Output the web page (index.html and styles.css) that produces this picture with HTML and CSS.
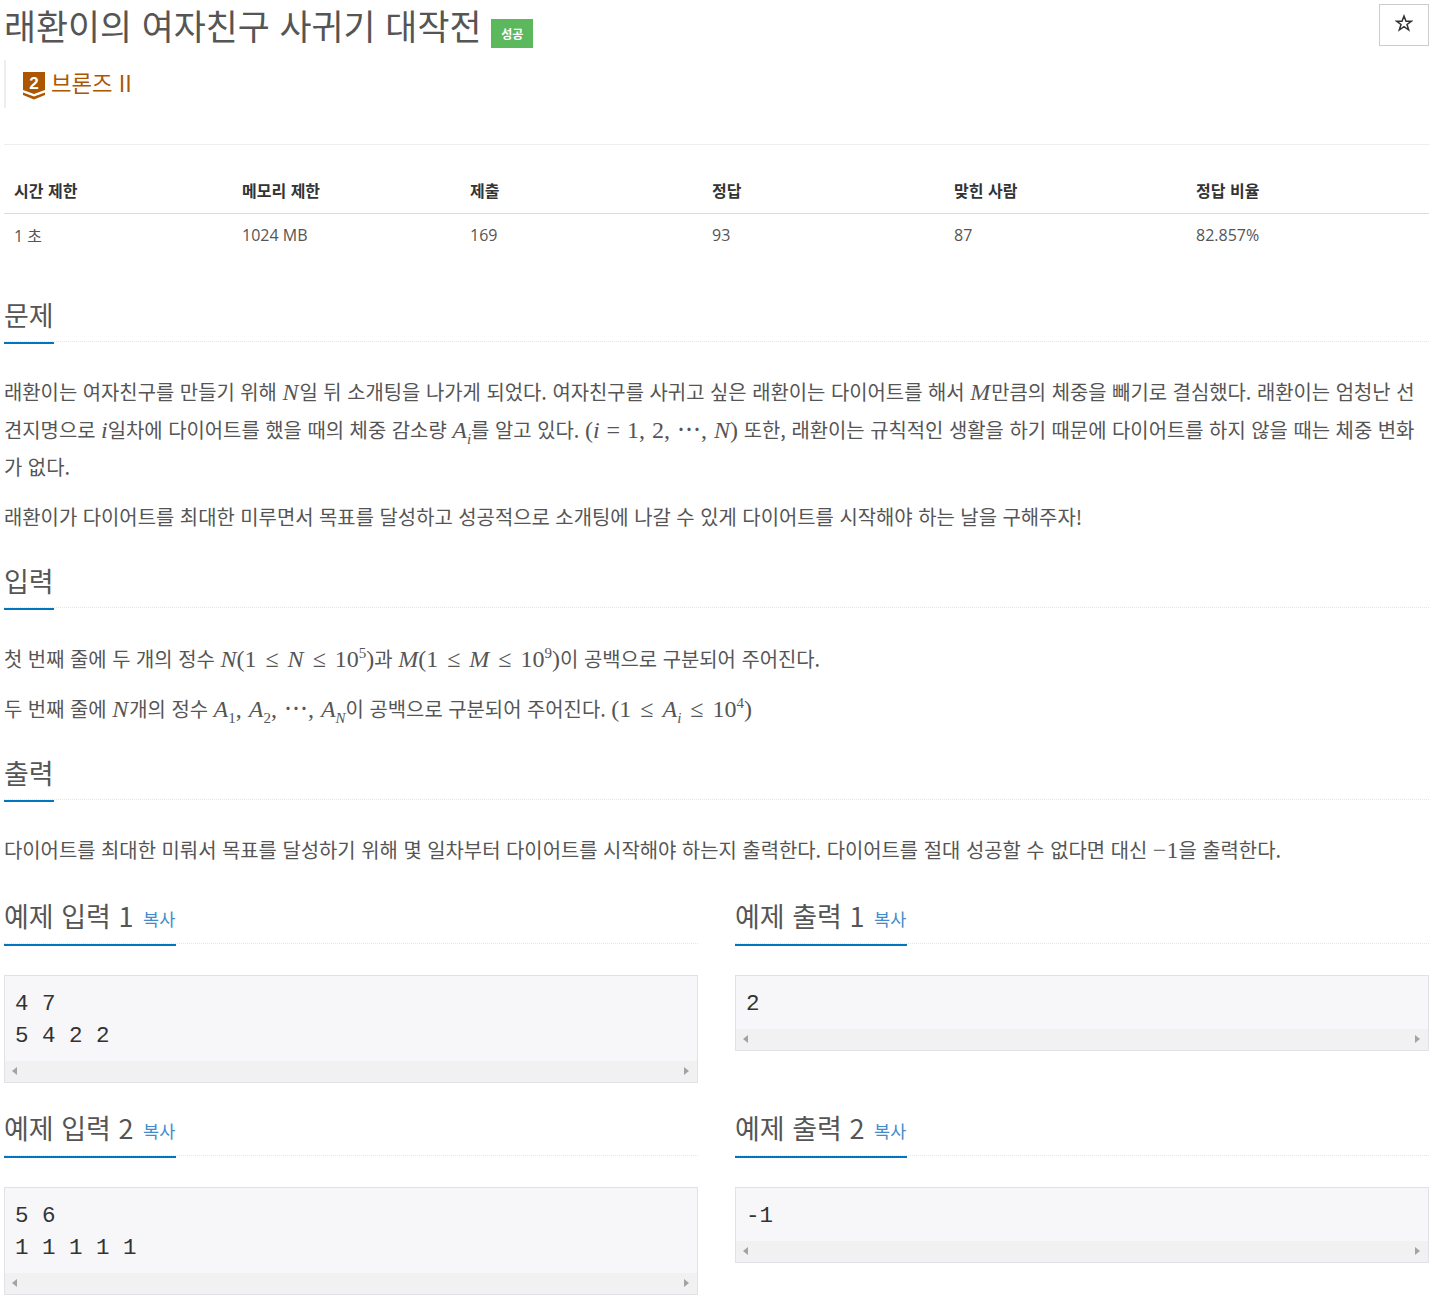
FILE: index.html
```html
<!DOCTYPE html>
<html lang="ko">
<head>
    <meta charset="UTF-8">
    <meta name="viewport" content="width=device-width, initial-scale=1.0">
    <title>래환이의 여자친구 사귀기 대작전</title>
    <link rel="stylesheet" href="styles.css">
</head>
<body>
    <div class="page">
        <div class="page-header">
            <h1 class="problem-title">래환이의 여자친구 사귀기 대작전 <span class="label-success">성공</span></h1>
            <button class="star-btn" type="button" aria-label="star">
                <svg viewBox="0 0 18 18" width="18" height="18">
                    <path d="M9 2L11 7.200H16.500L12 10.500L13.700 16L9 12.700L4.300 16L6 10.500L1.500 7.200H7Z" fill="none" stroke="#333" stroke-width="1.500"/>
                </svg>
            </button>
        </div>
        <div class="tier">
            <svg class="tier-icon" viewBox="0 0 22 28" width="22" height="28">
                <path d="M0 0H22V18L11 22L0 18Z" fill="#ad5600"/>
                <path d="M0 20.500L11 24.500L22 20.500V23L11 27.500L0 23Z" fill="#ad5600"/>
                <text x="11" y="17" text-anchor="middle" class="tier-num">2</text>
            </svg>
            <span class="tier-name">브론즈 II</span>
        </div>
        <hr class="divider">

        <table class="info-table">
            <thead>
                <tr>
                    <th class="col-1">시간 제한</th>
                    <th class="col-2">메모리 제한</th>
                    <th class="col-3">제출</th>
                    <th class="col-3">정답</th>
                    <th class="col-3">맞힌 사람</th>
                    <th>정답 비율</th>
                </tr>
            </thead>
            <tbody>
                <tr>
                    <td>1 초</td>
                    <td>1024 MB</td>
                    <td>169</td>
                    <td>93</td>
                    <td>87</td>
                    <td>82.857%</td>
                </tr>
            </tbody>
        </table>

        <section class="section section-problem">
            <div class="headline"><h2>문제</h2></div>
            <p>래환이는 여자친구를 만들기 위해 <i class="m m-n">N</i>일 뒤 소개팅을 나가게 되었다. 여자친구를 사귀고 싶은 래환이는 다이어트를 해서 <i class="m m-n">M</i>만큼의 체중을 빼기로 결심했다. 래환이는 엄청난 선견지명으로 <i class="m">i</i>일차에 다이어트를 했을 때의 체중 감소량 <i class="m">A<sub>i</sub></i>를 알고 있다. <span class="m-up m-list">(<i>i</i> = 1, 2, ⋯, <i>N</i>)</span> 또한, 래환이는 규칙적인 생활을 하기 때문에 다이어트를 하지 않을 때는 체중 변화가 없다.</p>
            <p>래환이가 다이어트를 최대한 미루면서 목표를 달성하고 성공적으로 소개팅에 나갈 수 있게 다이어트를 시작해야 하는 날을 구해주자!</p>
        </section>

        <section class="section section-input">
            <div class="headline"><h2>입력</h2></div>
            <p>첫 번째 줄에 두 개의 정수 <span class="m-up"><i>N</i>(1 ≤ <i>N</i> ≤ 10<sup>5</sup>)</span>과 <span class="m-up"><i>M</i>(1 ≤ <i>M</i> ≤ 10<sup>9</sup>)</span>이 공백으로 구분되어 주어진다.</p>
            <p>두 번째 줄에 <i class="m m-n">N</i>개의 정수 <span class="m-up m-list"><i>A</i><sub>1</sub>, <i>A</i><sub>2</sub>, ⋯, <i>A<sub>N</sub></i></span>이 공백으로 구분되어 주어진다. <span class="m-up">(1 ≤ <i>A<sub>i</sub></i> ≤ 10<sup>4</sup>)</span></p>
        </section>

        <section class="section section-output">
            <div class="headline"><h2>출력</h2></div>
            <p>다이어트를 최대한 미뤄서 목표를 달성하기 위해 몇 일차부터 다이어트를 시작해야 하는지 출력한다. 다이어트를 절대 성공할 수 없다면 대신 <span class="m-up">−1</span>을 출력한다.</p>
        </section>

        <div class="samples">
            <div class="sample">
                <div class="headline"><h2>예제 입력 1 <button class="copy" type="button">복사</button></h2></div>
                <pre class="sampledata"><code>4 7
5 4 2 2</code><span class="hscroll"></span></pre>
            </div>
            <div class="sample">
                <div class="headline"><h2>예제 출력 1 <button class="copy" type="button">복사</button></h2></div>
                <pre class="sampledata"><code>2</code><span class="hscroll"></span></pre>
            </div>
            <div class="sample">
                <div class="headline"><h2>예제 입력 2 <button class="copy" type="button">복사</button></h2></div>
                <pre class="sampledata"><code>5 6
1 1 1 1 1</code><span class="hscroll"></span></pre>
            </div>
            <div class="sample">
                <div class="headline"><h2>예제 출력 2 <button class="copy" type="button">복사</button></h2></div>
                <pre class="sampledata"><code>-1</code><span class="hscroll"></span></pre>
            </div>
        </div>
    </div>
</body>
</html>
```

FILE: styles.css
```css
:root {
    --text-color: #555;
    --blue: #0076c0;
    --line: #eee;
    --kr-font: "Noto Sans CJK KR", "Open Sans", sans-serif;
}

* {
    margin: 0;
    padding: 0;
    box-sizing: border-box;
}

body {
    font-family: "Open Sans", "Noto Sans CJK KR", sans-serif;
    background-color: #fff;
    color: var(--text-color);
    font-size: 14px;
}

.page {
    padding: 0 2px 0 4px;
    height: 1296px;
    overflow: hidden;
}

.page-header {
    display: flex;
    justify-content: space-between;
    align-items: flex-start;
    height: 60px;
}

.problem-title {
    font-family: var(--kr-font);
    font-size: 34.800px;
    font-weight: 400;
    line-height: 50px;
    color: #555;
}

.label-success {
    display: inline-block;
    background-color: #5cb85c;
    color: #fff;
    font-size: 12px;
    font-weight: 700;
    line-height: 29px;
    width: 42px;
    height: 29px;
    text-align: center;
    vertical-align: 1px;
}

.star-btn {
    display: flex;
    justify-content: center;
    width: 50px;
    height: 42px;
    margin-top: 4px;
    padding-top: 9px;
    background-color: #fff;
    border: 1px solid #ccc;
}

.tier {
    display: flex;
    align-items: flex-start;
    height: 48px;
    padding: 12px 0 0 17px;
    border-left: 2px solid #eee;
    color: #ad5600;
}

.tier-icon {
    display: block;
    flex: none;
    overflow: visible;
}

.tier-num {
    font-family: "Liberation Sans", sans-serif;
    font-size: 17px;
    font-weight: 700;
    fill: #fff;
}

.tier-name {
    font-family: var(--kr-font);
    font-size: 22.300px;
    line-height: 20px;
    margin-left: 6px;
}

.divider {
    border: 0;
    border-top: 1px solid var(--line);
    margin-top: 36px;
}

.info-table {
    width: 100%;
    margin-top: 24px;
    border-collapse: collapse;
    table-layout: fixed;
}

.info-table th {
    text-align: left;
    font-family: var(--kr-font);
    font-size: 16px;
    font-weight: 700;
    color: #333;
    height: 44px;
    padding: 0 10px 2px;
    border-bottom: 1px solid #ddd;
}

.info-table td {
    height: 43px;
    padding: 0 10px;
    font-size: 16px;
    color: #555;
    font-family: "Open Sans", "Noto Sans CJK KR", sans-serif;
}

.col-1, .col-2 {
    width: 228px;
}

.col-3 {
    width: 242px;
}

.section-problem {
    margin-top: 38px;
}

.section-input {
    margin-top: 24px;
}

.section-output {
    margin-top: 25px;
}

.headline {
    border-bottom: 1px dotted #e5e5e5;
    height: 48px;
    margin-bottom: 32px;
}

.section-problem .headline,
.section-output .headline {
    margin-bottom: 31px;
}

.headline h2 {
    display: inline-block;
    height: 50px;
    font-family: var(--kr-font);
    font-size: 27px;
    font-weight: 400;
    line-height: 42px;
    color: #555;
    border-bottom: 2px solid var(--blue);
}

.section p {
    font-family: var(--kr-font);
    font-size: 19.900px;
    line-height: 37.500px;
    color: #555;
    margin-bottom: 12.500px;
}

.m {
    font-family: "Liberation Serif", serif;
    font-size: 24px;
    font-style: italic;
    line-height: 0;
}

.m-n {
    padding-right: 1px;
}

.m-up {
    font-family: "Liberation Serif", serif;
    font-size: 24px;
    word-spacing: 3px;
    line-height: 0;
}

.m-list {
    word-spacing: 1px;
}

sub, sup {
    font-size: 15px;
    line-height: 0;
}

.samples {
    display: grid;
    grid-template-columns: 694px 694px;
    column-gap: 37px;
    margin-top: 26px;
    align-items: start;
}

.sample {
    height: 212px;
}

.sample .headline {
    height: 49px;
    margin-bottom: 31px;
}

.sample .headline h2 {
    height: 51px;
}

.copy {
    font-family: var(--kr-font);
    font-size: 17.500px;
    color: #428bca;
    background: none;
    border: 0;
    margin: 0 1px 0 2px;
    vertical-align: 1px;
}

.sampledata {
    display: block;
    background-color: #f7f7f9;
    border: 1px solid #e1e1e8;
    font-family: "Liberation Mono", monospace;
    font-size: 22.500px;
    line-height: 32px;
    color: #333;
}

.sampledata code {
    display: block;
    font-family: inherit;
    padding: 12px 10px 9px;
}

.hscroll {
    display: block;
    position: relative;
    height: 21px;
    background-color: #f1f1f1;
}

.hscroll::before,
.hscroll::after {
    content: "";
    position: absolute;
    top: 6px;
    border-style: solid;
    border-width: 4px 0 4px 5px;
    border-color: transparent transparent transparent #a3a3a3;
}

.hscroll::before {
    left: 7px;
    border-width: 4px 5px 4px 0;
    border-color: transparent #a3a3a3 transparent transparent;
}

.hscroll::after {
    right: 8px;
}
```
